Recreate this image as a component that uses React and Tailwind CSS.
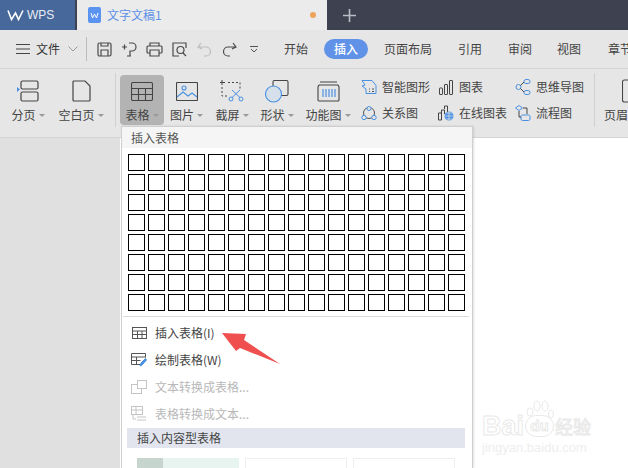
import React from "react";

const font = { fontFamily: '"Noto Sans CJK SC", "Liberation Sans", sans-serif' };
const latin = { fontFamily: '"Liberation Sans", sans-serif' };

const Caret = () => (
  <span className="ml-[3px] inline-block h-0 w-0 border-x-[3px] border-t-[3px] border-x-transparent border-t-[#999]" />
);

// top quick access icons
const qa = {
  save: <><rect x="2" y="2" width="13" height="13" rx="1.500" /><path d="M5 2v3h7V2M5 15V9h7v6" /></>,
  undoish: <><path d="M1 6h5M3.500 3.500v5M8 2h3a4 4 0 0 1 0 8H9v5M6 15h4" /></>,
  print: <><path d="M4 5V2h9v3M4 12H2a1 1 0 0 1-1-1V6a1 1 0 0 1 1-1h13a1 1 0 0 1 1 1v5a1 1 0 0 1-1 1h-2M4 9h9v6H4z" /></>,
  preview: <><path d="M15 7V2H2v13h6" /><circle cx="9.500" cy="9" r="3.500" /><path d="M12 12l3 3" /></>,
  undo: <><path d="M5 2L2 6l4 2M2 6h8a4.500 4.500 0 0 1 0 9H8" /></>,
  redo: <><path d="M12 2l3 4-4 2M15 6H7a4.500 4.500 0 0 0 0 9h2" /></>,
};

function QaIcon({ name, light }) {
  return (
    <svg width="17" height="17" viewBox="0 0 17 17" fill="none" stroke={light ? "#bdbdbd" : "#4a4a4a"} strokeWidth="1.200" className="w-[17px] shrink-0">
      {qa[name]}
    </svg>
  );
}

function RibbonBtn({ label, active, width, caret = true, children }) {
  return (
    <div className={`flex h-[50px] shrink-0 flex-col items-center justify-between rounded-[4px] pt-[4px] pb-[2px] ${active ? "bg-[#b3b3b3]" : ""}`} style={{ width }}>
      <div className="flex h-[24px] items-center justify-center">{children}</div>
      <div className="flex items-center text-[12px] leading-[16px] whitespace-nowrap text-[#444]">
        {label}
        {caret && <Caret />}
      </div>
    </div>
  );
}

function SmallBtn({ label, children }) {
  return (
    <div className="flex h-[26px] items-center gap-[5px] text-[12px] whitespace-nowrap text-[#444]">
      <div className="flex w-[16px] shrink-0 justify-center">{children}</div>
      {label}
    </div>
  );
}

function MenuRow({ label, disabled, children }) {
  return (
    <div className={`flex h-[27px] items-center gap-[8px] pl-[9px] text-[12px] whitespace-nowrap ${disabled ? "text-[#b8b8b8]" : "text-[#444]"}`}>
      <div className="flex w-[16px] justify-center">{children}</div>
      {label}
    </div>
  );
}

export default function App() {
  return (
    <div className="relative h-[468px] w-[628px] overflow-hidden bg-[#e0e0e0]" style={font}>
      {/* tab bar */}
      <div className="flex h-[30px] bg-[#3e4250]">
        <div className="flex w-[75px] items-center gap-[3px] bg-[#47689b] pl-[7px] text-[12px] text-[#e8ecf3]" style={latin}>
          <svg width="17" height="12" viewBox="0 0 17 12" fill="none" stroke="#fff" strokeWidth="1.600">
            <path d="M1 1.500l3.500 9L8.500 4l3 6.500L16 1.500" />
          </svg>
          WPS
        </div>
        <div className="ml-[2px] flex w-[250px] items-center bg-[#ebebeb] pl-[11px] text-[12px] text-[#5d92e8]">
          <div className="flex h-[16px] w-[13px] items-center justify-center rounded-[2px] bg-[#5b94f0]">
            <svg width="9" height="7" viewBox="0 0 9 7" fill="none" stroke="#fff" strokeWidth="1">
              <path d="M1 1l1.500 5L4.500 2l2 4L8 1" />
            </svg>
          </div>
          <span className="ml-[6px] flex-1">文字文稿1</span>
          <span className="mr-[11px] h-[6px] w-[6px] rounded-full bg-[#eda35a]" />
        </div>
        <div className="ml-[16px] flex items-center text-[#b9bcc4]">
          <svg width="13" height="13" viewBox="0 0 13 13" stroke="currentColor" strokeWidth="1.600">
            <path d="M6.500 0v13M0 6.500h13" />
          </svg>
        </div>
      </div>

      {/* quick access + tabs */}
      <div className="flex h-[39px] items-center border-b border-[#d4d4d4] bg-[#e6e6e6] text-[12px] whitespace-nowrap text-[#444]">
        <svg width="14" height="10" viewBox="0 0 14 10" stroke="#444" className="ml-[16px] shrink-0">
          <path d="M0 .5h14M0 5h14M0 9.500h14" />
        </svg>
        <span className="ml-[6px] text-[#333]">文件</span>
        <svg width="10" height="6" viewBox="0 0 10 6" fill="none" stroke="#999" className="ml-[8px] shrink-0">
          <path d="M.5.5L5 5 9.500.5" />
        </svg>
        <div className="mr-[9px] ml-[8px] h-[24px] w-px shrink-0 bg-[#bdbdbd]" />
        <div className="flex shrink-0 gap-[8px]">
          <QaIcon name="save" />
          <QaIcon name="undoish" />
          <QaIcon name="print" />
          <QaIcon name="preview" />
          <QaIcon name="undo" light />
          <QaIcon name="redo" />
        </div>
        <svg width="8" height="7" viewBox="0 0 8 7" fill="none" stroke="#555" className="ml-[12px] shrink-0">
          <path d="M0 .5h8M1 3l3 3 3-3" />
        </svg>
        <span className="ml-[26px]">开始</span>
        <span className="ml-[16px] flex h-[20px] w-[44px] shrink-0 items-center justify-center rounded-full bg-[#6093e8] font-medium text-white">插入</span>
        <span className="ml-[16px]">页面布局</span>
        <span className="ml-[26px]">引用</span>
        <span className="ml-[26px]">审阅</span>
        <span className="ml-[25px]">视图</span>
        <span className="ml-[27px]">章节</span>
      </div>

      {/* ribbon */}
      <div className="flex h-[69px] items-center border-b border-[#d4d4d4] bg-[#e6e6e6] pb-[6px]">
        <div className="ml-[2px] flex shrink-0">
          <RibbonBtn label="分页" width="52px">
            <svg width="22" height="22" viewBox="0 0 22 22" fill="none" stroke="#444" strokeWidth="1.200">
              <rect x="4" y="1" width="17" height="8" rx="1.500" />
              <rect x="4" y="12" width="17" height="9" rx="1.500" />
              <path d="M0 7l3 2.500L0 12z" fill="#4a90e2" stroke="none" />
            </svg>
          </RibbonBtn>
          <RibbonBtn label="空白页" width="54px">
            <svg width="19" height="22" viewBox="0 0 19 22" fill="none" stroke="#444" strokeWidth="1.200">
              <path d="M2 1h11l5 5v14a1 1 0 0 1-1 1H2a1 1 0 0 1-1-1V2a1 1 0 0 1 1-1z" />
            </svg>
          </RibbonBtn>
        </div>
        <div className="ml-[7px] h-[54px] w-px shrink-0 bg-[#d0d0d0]" />
        <div className="ml-[4px] flex shrink-0">
          <RibbonBtn label="表格" active width="44px">
            <svg width="22" height="19" viewBox="0 0 22 19" fill="none" stroke="#444" strokeWidth="1.100">
              <rect x=".5" y=".5" width="21" height="18" rx="1.500" />
              <path d="M.5 6.500h21M.5 12.500h21M7.500 6.500v12M14.500 6.500v12" />
            </svg>
          </RibbonBtn>
          <RibbonBtn label="图片" width="45px">
            <svg width="22" height="19" viewBox="0 0 22 19" fill="none" stroke="#444" strokeWidth="1.100">
              <rect x=".5" y=".5" width="21" height="18" rx="1" />
              <circle cx="8" cy="6" r="2" stroke="#4a90e2" />
              <path d="M1 15l6-5 5 4 4-3 5 4" stroke="#4a90e2" />
            </svg>
          </RibbonBtn>
          <RibbonBtn label="截屏" width="46px">
            <svg width="24" height="22" viewBox="0 0 24 22" fill="none" stroke="#444" strokeWidth="1">
              <path d="M2 0v5M0 2.500h5" />
              <path d="M8 2.500h12v8M2 7v9h5" strokeDasharray="2 2" />
              <circle cx="11" cy="19" r="2" stroke="#4a90e2" />
              <circle cx="21" cy="19" r="2" stroke="#4a90e2" />
              <path d="M12 17.500l8-7.500M20 17.500l-8-7.500" stroke="#4a90e2" />
            </svg>
          </RibbonBtn>
          <RibbonBtn label="形状" width="44px">
            <svg width="24" height="23" viewBox="0 0 24 23" fill="none" stroke="#444" strokeWidth="1.100">
              <rect x="8" y=".5" width="15" height="15" rx="1.500" />
              <circle cx="8.500" cy="14" r="8" fill="#d6e0ea" stroke="#4a90e2" />
            </svg>
          </RibbonBtn>
          <RibbonBtn label="功能图" width="58px">
            <svg width="23" height="21" viewBox="0 0 23 21" fill="none" stroke="#444" strokeWidth="1.100">
              <path d="M3 1h17M2 4h19l1 2v13a1 1 0 0 1-1 1H2a1 1 0 0 1-1-1V6z" />
              <path d="M6 8v8M9 8v8M12 8v8M15 8v8M18 8v8" stroke="#4a90e2" strokeWidth="1.200" />
            </svg>
          </RibbonBtn>
        </div>
        <div className="ml-[4px] flex shrink-0 flex-col">
          <SmallBtn label="智能图形">
            <svg width="16" height="15" viewBox="0 0 16 15" fill="none" stroke="#4a90e2">
              <path d="M1 .5h10l4 5v8H5V9L1 6l3-1z" />
              <path d="M8 9h1M11 9h2M8 11.500h1M11 11.500h2" stroke="#555" />
            </svg>
          </SmallBtn>
          <SmallBtn label="关系图">
            <svg width="16" height="15" viewBox="0 0 16 15" fill="none" stroke="#4a90e2">
              <circle cx="8" cy="7" r="5.500" stroke="#555" />
              <circle cx="8" cy="2.500" r="2" fill="#e6e6e6" />
              <circle cx="3" cy="11.500" r="2.200" fill="#e6e6e6" />
              <circle cx="13" cy="11.500" r="2.200" fill="#e6e6e6" />
            </svg>
          </SmallBtn>
        </div>
        <div className="ml-[8px] flex shrink-0 flex-col">
          <SmallBtn label="图表">
            <svg width="14" height="15" viewBox="0 0 14 15" fill="none" stroke="#444">
              <rect x=".5" y="8" width="3" height="6.500" rx=".5" />
              <rect x="5.500" y="4.500" width="3" height="10" rx=".5" />
              <rect x="10.500" y=".5" width="3" height="14" rx=".5" />
            </svg>
          </SmallBtn>
          <SmallBtn label="在线图表">
            <svg width="16" height="16" viewBox="0 0 16 16" fill="none" stroke="#444">
              <path d="M3.500 15H.5V8h3M3.500 15V5h3v4M6.500 4V1h3v6" />
              <circle cx="11" cy="11" r="4.500" fill="#4a90e2" stroke="none" />
              <path d="M6.500 11h9M11 6.500v9M8 8h6M8 14h6" stroke="#e6e6e6" strokeWidth=".7" />
            </svg>
          </SmallBtn>
        </div>
        <div className="ml-[8px] flex shrink-0 flex-col">
          <SmallBtn label="思维导图">
            <svg width="16" height="16" viewBox="0 0 16 16" fill="none" stroke="#4a90e2">
              <circle cx="3.500" cy="8" r="2.500" />
              <rect x="9" y=".5" width="6" height="4" rx="2" />
              <rect x="9" y="11.500" width="6" height="4" rx="2" />
              <path d="M5.500 6.500L9 3M5.500 9.500L9 13" stroke="#444" />
            </svg>
          </SmallBtn>
          <SmallBtn label="流程图">
            <svg width="16" height="16" viewBox="0 0 16 16" fill="none" stroke="#4a90e2">
              <path d="M4 .5l3.500 2.500L4 5.500.5 3z" />
              <rect x="6" y="10" width="9" height="5.500" rx="1.500" />
              <path d="M8 3h4v6M4 6v6h2" stroke="#444" />
            </svg>
          </SmallBtn>
        </div>
        <div className="ml-[10px] h-[54px] w-px shrink-0 bg-[#d0d0d0]" />
        <div className="ml-[9px] flex h-[50px] shrink-0 flex-col justify-between pt-[4px] pb-[2px] text-[12px] leading-[16px] whitespace-nowrap text-[#444]">
          <svg width="24" height="24" viewBox="0 0 24 24" fill="none" stroke="#444" strokeWidth="1.100" className="ml-[18px]">
            <rect x=".5" y="1" width="22" height="22" rx="2" />
          </svg>
          页眉页脚
        </div>
      </div>

      {/* workspace */}
      <div className="flex h-[330px]">
        <div className="w-[120px] bg-[#e0e0e0]" />
        <div className="flex-1 bg-white" />
      </div>

      {/* table dropdown */}
      <div className="absolute top-[126px] left-[121px] h-[342px] w-[352px] border border-b-0 border-[#cfcfcf] bg-white pr-[6px] shadow-[1px_0_2px_rgba(0,0,0,0.12)]">
        <div className="-mr-[6px] flex h-[21px] items-center bg-[#f5f5f5] pl-[9px] text-[12px] text-[#555]">插入表格</div>
        <div className="mt-[6px] ml-[6px] grid w-max grid-cols-[repeat(17,17px)] gap-[3px]">
          {Array.from({ length: 136 }, (_, i) => (
            <div key={i} className="h-[17px] w-[17px] border border-black bg-white" />
          ))}
        </div>
        <div className="mt-[5px] -mr-[3px] ml-[1px] h-px bg-[#dcdcdc]" />
        <div className="mt-[2px]">
          <MenuRow label="插入表格(I)">
            <svg width="15" height="12" viewBox="0 0 15 12" fill="none" stroke="#555">
              <rect x=".5" y=".5" width="14" height="11" />
              <path d="M.5 4h14M.5 7.500h14M5.500 4v8M10 4v8" />
            </svg>
          </MenuRow>
          <MenuRow label="绘制表格(W)">
            <svg width="16" height="14" viewBox="0 0 16 14" fill="none" stroke="#555">
              <path d="M10 11.500H.5V.5h14v4M.5 4h14M.5 7.500h9M5.500 4v8" />
              <path d="M9 13l1-3 4.500-4.500 1 1.500L11 12z" fill="#4a90e2" stroke="#4a90e2" />
            </svg>
          </MenuRow>
          <MenuRow label="文本转换成表格..." disabled>
            <svg width="16" height="14" viewBox="0 0 16 14" fill="none" stroke="#c4c4c4">
              <rect x=".5" y="4.500" width="10" height="9" />
              <rect x="6.500" y=".5" width="9" height="8" fill="#fff" />
            </svg>
          </MenuRow>
          <MenuRow label="表格转换成文本..." disabled>
            <svg width="16" height="15" viewBox="0 0 16 15" fill="none" stroke="#c4c4c4">
              <rect x=".5" y=".5" width="11" height="8" />
              <path d="M.5 4h11M5 .5v8M6 11h9M6 14h9M2 9v4h3" />
            </svg>
          </MenuRow>
        </div>
        <div className="mt-[1px] ml-[5px] flex h-[20px] w-[338px] items-center bg-[#e2e5ee] pl-[10px] text-[12px] text-[#444]">插入内容型表格</div>
        <div className="mt-[10px] ml-[15px] flex gap-[6px]">
          <div className="h-[20px] w-[102px] bg-[#e8f4ef]">
            <div className="h-full w-[26px] bg-[#c6d6ce]" />
          </div>
          <div className="h-[20px] w-[102px] border border-[#eeeeee]" />
          <div className="h-[20px] w-[102px] border border-[#eeeeee]" />
        </div>
      </div>

      {/* red annotation arrow */}
      <svg width="60" height="36" viewBox="0 0 60 36" className="absolute top-[331px] left-[221px]">
        <path d="M1 2L25 3 23 9 59 33 19 17 15 20z" fill="#ef4f4f" />
      </svg>

      {/* baidu watermark */}
      <div className="absolute top-[400px] left-[482px] flex flex-col text-transparent [-webkit-text-stroke:1px_#e9e9e9]">
        <svg width="28" height="20" viewBox="0 0 28 20" fill="none" stroke="#e9e9e9" className="ml-[44px] -mb-[5px]">
          <ellipse cx="4" cy="12" rx="3" ry="4" />
          <ellipse cx="11" cy="6" rx="3" ry="5" />
          <ellipse cx="19" cy="6" rx="3" ry="5" />
          <ellipse cx="25" cy="14" rx="2.500" ry="4" />
        </svg>
        <div className="flex items-center leading-[22px]">
          <span className="text-[27px] font-bold" style={latin}>Bai</span>
          <span className="ml-[1px] flex h-[22px] w-[29px] items-center justify-center rounded-full border border-[#e9e9e9] text-[15px] font-bold" style={latin}>du</span>
          <span className="ml-[1px] text-[18px]" style={font}>经验</span>
        </div>
        <div className="mt-[4px] text-[13px] leading-[14px] text-[#eeeeee] [-webkit-text-stroke:0]" style={latin}>jingyan.baidu.com</div>
      </div>
    </div>
  );
}
